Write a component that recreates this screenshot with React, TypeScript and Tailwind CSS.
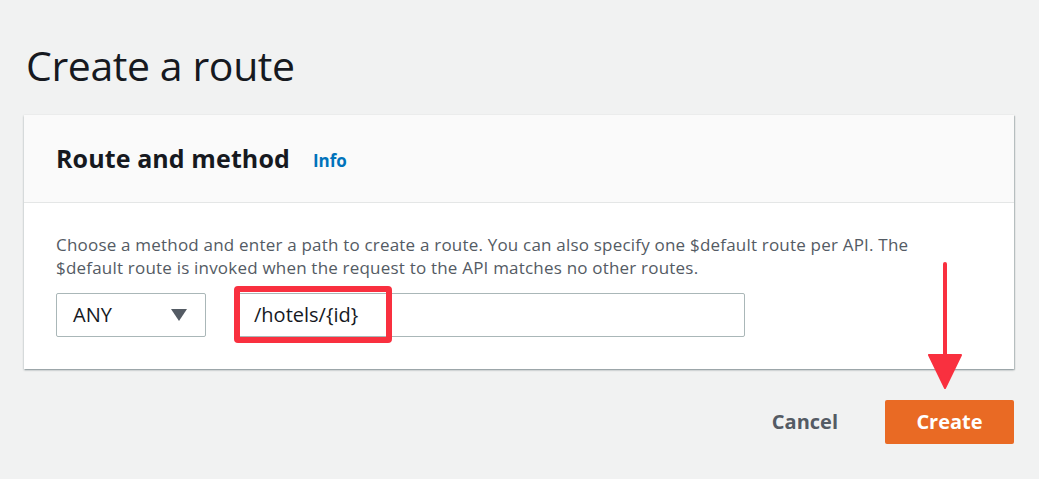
import React from 'react';

export default function App() {
  return (
    <div className="relative h-[479px] w-[1039px] overflow-hidden bg-[#f1f2f2] font-['Open_Sans',sans-serif] text-[#16191f]">
      <div className="px-6 pt-[40px]">
        <h1 className="pl-[2px] text-[41px] leading-[50px] font-normal tracking-[-0.4px]">Create a route</h1>

        {/* Card */}
        <div className="mt-[25px] w-[990px] bg-white shadow-[0_1px_2px_rgba(0,28,36,0.35),1px_1px_1px_rgba(0,28,36,0.15)]">
          <div className="flex h-[88px] items-center border-b border-[#e4e6e6] bg-[#fafafa] px-8">
            <h2 className="text-[25px] font-bold leading-none tracking-[0.1px]">Route and method</h2>
            <a className="ml-[23px] mt-[4px] text-[17px] font-bold text-[#0073bb]">Info</a>
          </div>
          <div className="px-8 pt-[30px] pb-[32px]">
            <p className="w-[900px] text-[17px] leading-[23px] tracking-[0.2px] text-[#545b64]">
              Choose a method and enter a path to create a route. You can also specify one $default route per API. The $default route is invoked when the request to the API matches no other routes.
            </p>
            <div className="mt-[14px] flex items-center gap-[31px]">
              <div className="flex h-[44px] w-[150px] items-center justify-between rounded-[2px] border border-[#aab7b8] px-4">
                <span className="text-[20px]">ANY</span>
                <svg width="16" height="12" viewBox="0 0 16 12" className="mr-[2px]">
                  <path d="M0 0h16L8 12z" fill="#545b64" />
                </svg>
              </div>
              <div className="relative">
                <div className="flex h-[44px] w-[508px] items-center rounded-[2px] border border-[#aab7b8] px-4 text-[20px]">
                  /hotels/&#123;id&#125;
                </div>
                <div className="absolute left-[-3px] top-[-7px] h-[57px] w-[158px] rounded-[4px] border-[6px] border-[#f9303f]" />
              </div>
            </div>
          </div>
        </div>

        <div className="mt-[31px] flex w-[990px] items-center justify-end">
          <button className="mr-[47px] text-[20px] font-bold text-[#545b64]">Cancel</button>
          <button className="h-[44px] w-[129px] rounded-[2px] bg-[#e96a24] text-[20px] font-bold text-white">Create</button>
        </div>
      </div>

      {/* annotation arrow */}
      <svg className="absolute left-[928px] top-[262px]" width="34" height="128" viewBox="0 0 34 128">
        <path d="M17 2v96" stroke="#f9303f" strokeWidth="4" strokeLinecap="round" />
        <path d="M1 93h32L17 126z" fill="#f9303f" strokeLinejoin="round" stroke="#f9303f" strokeWidth="2" />
      </svg>
    </div>
  );
}
